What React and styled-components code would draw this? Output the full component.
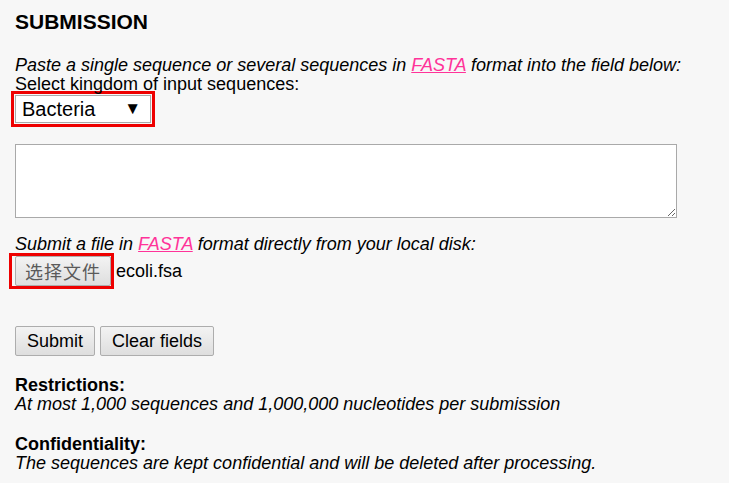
import styled, { createGlobalStyle } from "styled-components";

const GlobalStyle = createGlobalStyle`
  html, body {
    margin: 0;
    background: #f7f7f7;
  }
  body {
    font-family: "Liberation Sans", Arial, sans-serif;
    color: #000;
  }
`;

const Page = styled.div`
  padding: 11px 15px 0 15px;
  font-size: 18px;
  line-height: 19px;
`;

const Title = styled.h2`
  margin: 0 0 23px 0;
  font-size: 21px;
  line-height: 22px;
  font-weight: bold;
`;

const Note = styled.div`
  font-style: italic;
`;

const Link = styled.a`
  color: #ff3399;
  text-decoration: underline;
  cursor: pointer;
`;

const Marked = styled.div`
  display: flex;
  width: fit-content;
  border: 3px solid #ee0000;
  padding: ${(p) => p.$pad || "1px"};
  margin: ${(p) => p.$margin || "0"};
`;

const Select = styled.div`
  box-sizing: border-box;
  display: flex;
  align-items: center;
  justify-content: space-between;
  width: 136px;
  height: 28px;
  padding: 0 9px 0 6px;
  background: #fff;
  border: 1px solid #a9a9a9;
  font-size: 20px;
  line-height: 24px;
`;

const Arrow = styled.span`
  font-size: 17px;
  line-height: 20px;
`;

const SeqBox = styled.textarea`
  display: block;
  box-sizing: border-box;
  width: 662px;
  height: 74px;
  margin: 17px 0 17px 0;
  border: 1px solid #a9a9a9;
  background: #fff;
  resize: both;
`;

const FileRow = styled.div`
  display: flex;
  align-items: center;
  margin: -1px 0 0 -6px;
`;

const FileButton = styled.button`
  box-sizing: border-box;
  width: 96px;
  height: 30px;
  padding: 0;
  border: 1px solid #adadad;
  border-radius: 2px;
  background: linear-gradient(#f3f3f3, #dedede);
  color: #5a5a5a;
  font-family: "Noto Sans CJK SC", sans-serif;
  font-size: 18px;
  letter-spacing: 1px;
`;

const FileName = styled.span`
  margin-left: 2px;
`;

const Actions = styled.div`
  display: flex;
  gap: 5px;
  margin: 37px 0 19px 0;
`;

const Button = styled.button`
  box-sizing: border-box;
  height: 30px;
  padding: 0 11px;
  border: 1px solid #adadad;
  border-radius: 2px;
  background: linear-gradient(#f3f3f3, #dedede);
  font-family: "Liberation Sans", Arial, sans-serif;
  font-size: 18px;
  color: #000;
`;

const Block = styled.div`
  margin-bottom: 20px;
`;

const Heading = styled.div`
  font-weight: bold;
  line-height: 20px;
`;

export default function App() {
  return (
    <>
      <GlobalStyle />
      <Page>
        <Title>SUBMISSION</Title>
        <Note>
          Paste a single sequence or several sequences in <Link>FASTA</Link> format into the field below:
        </Note>
        <div>Select kingdom of input sequences:</div>
        <Marked $margin="-3px 0 0 -4px">
          <Select>
            <span>Bacteria</span>
            <Arrow>▼</Arrow>
          </Select>
        </Marked>
        <SeqBox />
        <Note>
          Submit a file in <Link>FASTA</Link> format directly from your local disk:
        </Note>
        <FileRow>
          <Marked $pad="0 0 0 3px">
            <FileButton>选择文件</FileButton>
          </Marked>
          <FileName>ecoli.fsa</FileName>
        </FileRow>
        <Actions>
          <Button>Submit</Button>
          <Button>Clear fields</Button>
        </Actions>
        <Block>
          <Heading>Restrictions:</Heading>
          <Note>At most 1,000 sequences and 1,000,000 nucleotides per submission</Note>
        </Block>
        <Block>
          <Heading>Confidentiality:</Heading>
          <Note>The sequences are kept confidential and will be deleted after processing.</Note>
        </Block>
      </Page>
    </>
  );
}
